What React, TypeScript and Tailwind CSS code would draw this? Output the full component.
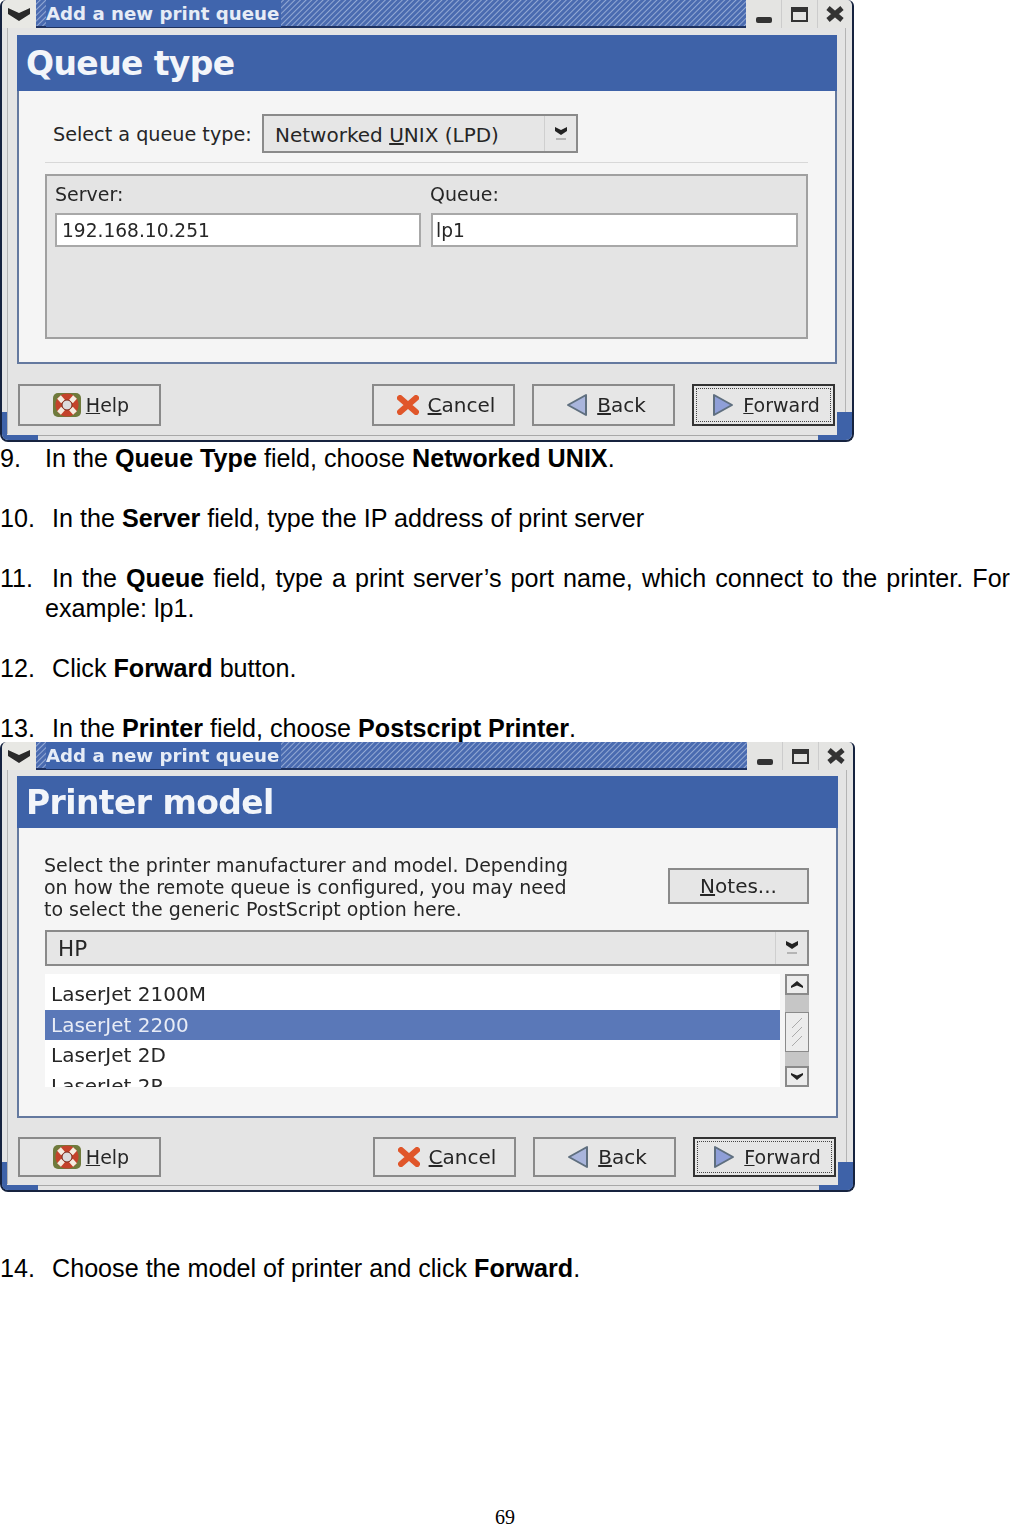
import React from "react";

const ui = "font-['DejaVu_Sans',sans-serif] text-[#262626]";

const Lifebuoy = () => (
  <svg width="30" height="26" viewBox="0 0 30 26">
    <rect x="1" y="1" width="28" height="24" rx="5" fill="#6f7a3c" />
    <circle cx="15" cy="13" r="11.5" fill="#c4432b" />
    <path d="M7 5 L11 9.5 M23 5 L19 9.5 M7 21 L11 16.5 M23 21 L19 16.5" stroke="#f4ece0" strokeWidth="5" />
    <circle cx="15" cy="13" r="5" fill="#dcdcdc" stroke="#7a2a1a" strokeWidth="1" />
  </svg>
);

const CancelIcon = () => (
  <svg width="22" height="20" viewBox="0 0 22 20">
    <path d="M3 3 L19 17 M19 3 L3 17" stroke="#e0562a" strokeWidth="6" strokeLinecap="round" />
  </svg>
);

const BackIcon = () => (
  <svg width="22" height="24" viewBox="0 0 22 24">
    <path d="M20 2 L20 22 L2 12 Z" fill="#a9b5dc" stroke="#5f6f7f" strokeWidth="2" strokeLinejoin="round" />
  </svg>
);

const ForwardIcon = () => (
  <svg width="22" height="24" viewBox="0 0 22 24">
    <path d="M2 2 L2 22 L20 12 Z" fill="#8f9fd8" stroke="#5f6f7f" strokeWidth="2" strokeLinejoin="round" />
  </svg>
);

const ChevronDown = () => (
  <svg width="14" height="16" viewBox="0 0 14 16">
    <path d="M1 1 L7 4 L13 1 L13 5 L7 9 L1 5 Z" fill="#222" />
    <rect x="2" y="12" width="10" height="2" fill="#b5b5b5" />
  </svg>
);

const TitleBar = () => (
  <div className="flex h-[28px] shrink-0 items-stretch">
    <div className="flex w-[34px] items-center justify-center rounded-tl-[6px] bg-[#e8e8e4]">
      <svg width="26" height="15" viewBox="0 0 26 15">
        <path d="M2 1 L13 6 L24 1 L24 7 L13 14 L2 7 Z" fill="#2a2a2a" />
      </svg>
    </div>
    <div className="flex flex-1 items-center border-b-2 border-[#1e3260] bg-[repeating-linear-gradient(135deg,#4a6bb0_0px,#4a6bb0_2px,#93a9d4_3px,#4a6bb0_4px)] pl-[10px]">
      <span className="bg-[#4065ad] pr-[2px] pt-[2px] text-[18.2px] font-bold leading-[26px] text-[#e6ecf6]">
        Add a new print queue
      </span>
    </div>
    <div className="flex w-[36px] items-end justify-center border-r border-[#ccc] bg-[#e4e4e2] pb-[5px]">
      <div className="h-[6px] w-[16px] rounded-[2px] bg-[#333]" />
    </div>
    <div className="flex w-[36px] items-center justify-center border-r border-[#ccc] bg-[#e4e4e2]">
      <div className="h-[15px] w-[17px] border-2 border-t-[5px] border-[#333]" />
    </div>
    <div className="flex w-[34px] items-center justify-center rounded-tr-[6px] bg-[#e4e4e2]">
      <svg width="20" height="18" viewBox="0 0 20 18">
        <path d="M3 3 L17 15 M17 3 L3 15" stroke="#333" strokeWidth="5" />
      </svg>
    </div>
  </div>
);

const Btn = ({ icon, label, focus = false, w = "w-[143px]", inner = "gap-[9px] pl-[5px]", size = "text-[20px]" }: { icon?: React.ReactNode; label: React.ReactNode; focus?: boolean; w?: string; inner?: string; size?: string }) => (
  <div className={`flex h-full ${w} items-center justify-center border-2 ${focus ? "border-[#333] p-[2px]" : "border-[#8a8a8a]"} bg-[#e6e6e6] ${size}`}>
    <div className={`flex h-full w-full items-center justify-center ${inner} ${focus ? "border border-dotted border-[#444]" : ""}`}>
      {icon}
      <span>{label}</span>
    </div>
  </div>
);

const ButtonRow = ({ h }: { h: string }) => (
  <div className={`flex ${h} items-stretch pl-[16px] pr-[17px]`}>
    <Btn icon={<Lifebuoy />} label={<><u>H</u>elp</>} inner="gap-[4px] pl-[2px]" size="text-[19px]" />
    <div className="flex-1" />
    <Btn icon={<CancelIcon />} label={<><u>C</u>ancel</>} />
    <div className="w-[17px]" />
    <Btn icon={<BackIcon />} label={<><u>B</u>ack</>} />
    <div className="w-[17px]" />
    <Btn icon={<ForwardIcon />} label={<><u>F</u>orward</>} focus size="text-[19px]" />
  </div>
);

const Win = ({ size, gap, panel, head, title, buttonsTop, buttonsH, children }: { size: string; gap: string; panel: string; head: string; title: string; buttonsTop: string; buttonsH: string; children: React.ReactNode }) => (
  <div className={`relative flex ${size} flex-col overflow-hidden rounded-t-[6px] rounded-b-[8px] border-x-2 border-b-2 border-[#16233f] bg-[#e4e4e4] blur-[0.6px] ${ui}`}>
    <TitleBar />
    <div className={`${gap} shrink-0`} />
    <div className={`mx-[15px] flex ${panel} shrink-0 flex-col bg-[#f5f5f5]`}>
      <div className={`flex ${head} shrink-0 items-center bg-[#3e62a8] pl-[9px] pt-[2px] text-[33px] font-bold tracking-[-0.6px] text-[#f2f5fa]`}>
        {title}
      </div>
      <div className="flex-1 border-x-2 border-b-2 border-[#64799f]">{children}</div>
    </div>
    <div className={buttonsTop} />
    <ButtonRow h={buttonsH} />
    {/* frame details along the window edges */}
    <div className="absolute bottom-[6px] left-[5px] top-[28px] w-px bg-[#b4b4b4]" />
    <div className="absolute bottom-[6px] right-[6px] top-[28px] w-px bg-[#b4b4b4]" />
    <div className="absolute bottom-[4px] left-0 right-0 h-px bg-[#a8a8a8]" />
    <div className="absolute bottom-0 left-0 h-[5px] w-[36px] bg-[#3e62a8]" />
    <div className="absolute bottom-0 left-0 h-[28px] w-[5px] bg-[#3e62a8]" />
    <div className="absolute bottom-0 right-0 h-[5px] w-[34px] bg-[#3e62a8]" />
    <div className="absolute bottom-0 right-0 h-[28px] w-[15px] bg-[#3e62a8]" />
  </div>
);

const Combo = ({ w, size = "text-[20px]", children }: { w: string; size?: string; children: React.ReactNode }) => (
  <div className={`flex h-full ${w} items-stretch border-2 border-[#8a8a8a] bg-[#e6e6e6]`}>
    <div className={`flex flex-1 items-center pl-[11px] pt-[2px] ${size}`}>{children}</div>
    <div className="flex w-[32px] items-center justify-center border-l border-[#cfcfcf]">
      <ChevronDown />
    </div>
  </div>
);

const Field = ({ w, pad, value }: { w: string; pad: string; value: string }) => (
  <div className={`flex h-[34px] ${w} items-center border-2 border-[#a8a8a8] bg-white pt-[1px] ${pad} text-[18.6px]`}>{value}</div>
);

const QueueType = () => (
  <>
    <div className="ml-[34px] mt-[23px] flex h-[39px] items-center">
      <span className="w-[209px] pt-[2px] text-[19.2px]">Select a queue type:</span>
      <Combo w="w-[316px]">
        <span>Networked <u>U</u>NIX (LPD)</span>
      </Combo>
    </div>
    <div className="ml-[26px] mr-[27px] mt-[9px] h-px bg-[#d8d8d8]" />
    <div className="ml-[26px] mr-[27px] mt-[11px] h-[165px] border-2 border-[#a0a0a0] bg-[#e4e4e4] px-[8px]">
      <div className="flex h-[37px] items-center pb-[2px] text-[19px]">
        <span className="w-[375px]">Server:</span>
        <span>Queue:</span>
      </div>
      <div className="flex gap-[10px]">
        <Field w="w-[366px]" pad="pl-[5px]" value="192.168.10.251" />
        <Field w="w-[367px]" pad="pl-[3px]" value="lp1" />
      </div>
    </div>
  </>
);

const rows = ["LaserJet 2100M", "LaserJet 2200", "LaserJet 2D", "LaserJet 2P"];

const ScrollBtn = ({ up = false }: { up?: boolean }) => (
  <div className="flex h-[21px] items-center justify-center border-2 border-[#8a8a8a] bg-[#ececec]">
    <svg width="12" height="8" viewBox="0 0 12 8">
      <path d={up ? "M0 6 L6 1 L12 6 L12 8 L6 5.5 L0 8 Z" : "M0 0 L6 2.5 L12 0 L12 2 L6 7 L0 2 Z"} fill="#222" />
    </svg>
  </div>
);

const PrinterModel = () => (
  <>
    <div className="ml-[25px] mt-[26px] flex h-[66px] items-start">
      <p className="w-[624px] text-[19px] leading-[22px]">
        Select the printer manufacturer and model. Depending
        <br />
        on how the remote queue is configured, you may need
        <br />
        to select the generic PostScript option here.
      </p>
      <div className="mt-[14px] h-[36px]">
        <Btn w="w-[141px]" inner="pl-0" label={<><u>N</u>otes...</>} />
      </div>
    </div>
    <div className="ml-[26px] mt-[10px] h-[36px]">
      <Combo w="w-[764px]" size="text-[21.5px]">HP</Combo>
    </div>
    <div className="ml-[26px] mt-[8px] flex h-[113px] w-[764px] gap-[5px]">
      <div className="h-full flex-1 overflow-hidden bg-white pt-[5px] text-[20px]">
        {rows.map((r, i) => (
          <div key={r} className={`flex h-[30.5px] items-center pl-[6px] ${i === 1 ? "bg-[#5a78b8] text-[#e8ecf6]" : ""}`}>
            {r}
          </div>
        ))}
      </div>
      <div className="flex h-full w-[24px] flex-col bg-[#c6c6c6]">
        <ScrollBtn up />
        <div className="h-[17px]" />
        <div className="flex h-[41px] items-center justify-center border border-[#8a8a8a] bg-[#ececec]">
          <svg width="14" height="30" viewBox="0 0 14 30">
            <path d="M2 11 L12 1 M2 20 L12 10 M2 29 L12 19" stroke="#aaa" strokeWidth="1" />
          </svg>
        </div>
        <div className="h-[14px]" />
        <ScrollBtn />
      </div>
    </div>
  </>
);

const Line = ({ n, indent = "w-[52px]", children }: { n: string; indent?: string; children: React.ReactNode }) => (
  <p className="h-[30px] whitespace-nowrap">
    <span className={`inline-block ${indent}`}>{n}</span>
    {children}
  </p>
);

const App: React.FC = () => {
  return (
    <div className="h-[1524px] w-[1010px] overflow-hidden bg-white font-['Liberation_Sans',Arial,sans-serif] text-[25.15px] leading-[30px] text-black">
      <Win size="h-[442px] w-[854px]" gap="h-[7px]" panel="h-[329px]" head="h-[56px]" title="Queue type" buttonsTop="h-[20px] shrink-0" buttonsH="h-[42px]">
        <QueueType />
      </Win>
      <div className="h-[300px] pt-px">
        <Line n="9." indent="w-[45px]">
          In the <b>Queue Type</b> field, choose <b>Networked UNIX</b>.
        </Line>
        <div className="h-[30px]" />
        <Line n="10.">
          In the <b>Server</b> field, type the IP address of print server
        </Line>
        <div className="h-[30px]" />
        <p className="pl-[45px] text-justify -indent-[45px]">
          <span className="inline-block w-[52px] indent-0">11.</span>
          In the <b>Queue</b> field, type a print server’s port name, which connect to the printer. For example: lp1.
        </p>
        <div className="h-[30px]" />
        <Line n="12.">
          Click <b>Forward</b> button.
        </Line>
        <div className="h-[30px]" />
        <Line n="13.">
          In the <b>Printer</b> field, choose <b>Postscript Printer</b>.
        </Line>
      </div>
      <Win size="h-[450px] w-[855px]" gap="h-[6px]" panel="h-[342px]" head="h-[52px]" title="Printer model" buttonsTop="h-[19px] shrink-0" buttonsH="h-[40px]">
        <PrinterModel />
      </Win>
      <div className="mt-[61px]">
        <Line n="14.">
          Choose the model of printer and click <b>Forward</b>.
        </Line>
      </div>
      <p className="mt-[227px] text-center font-['Liberation_Serif',serif] text-[20px] leading-[14px]">69</p>
    </div>
  );
};

export default App;
